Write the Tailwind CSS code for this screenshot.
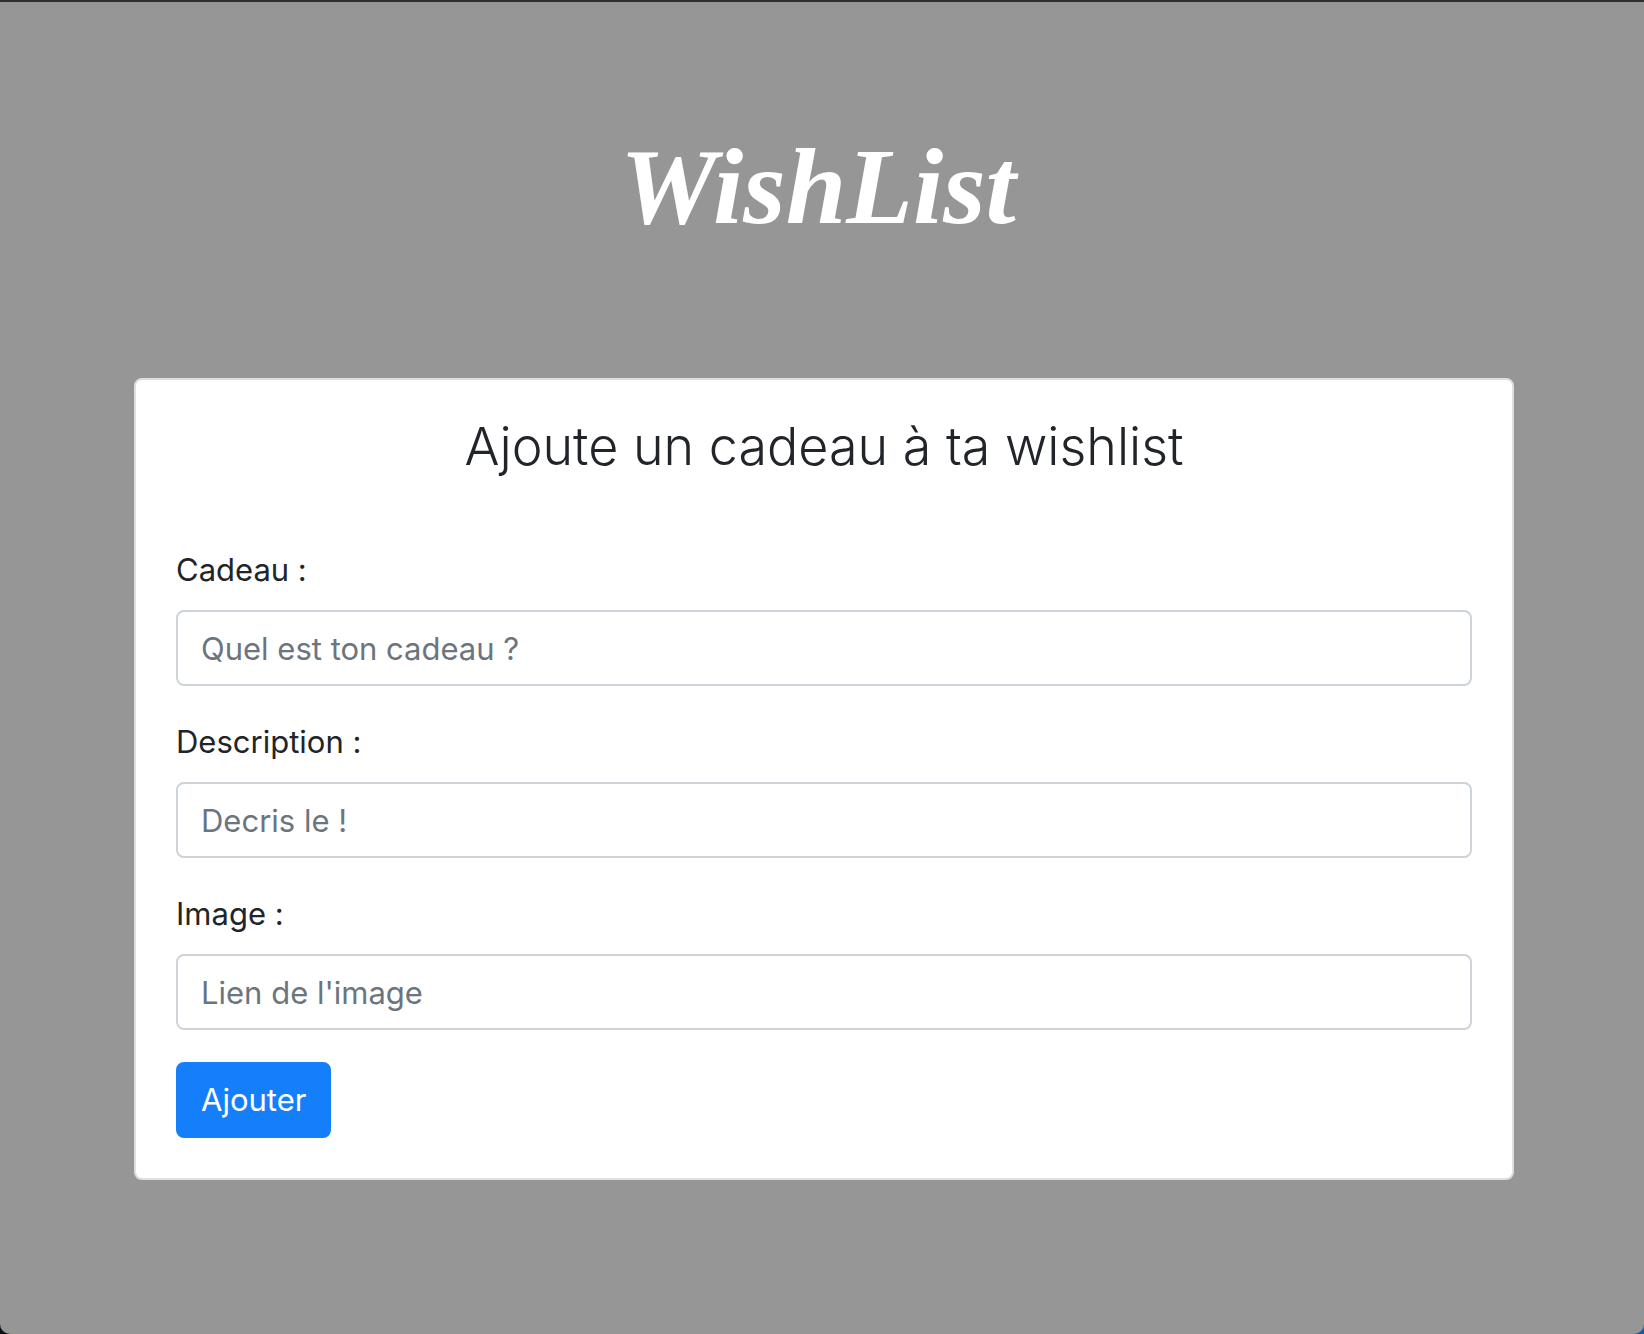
<!DOCTYPE html>
<html lang="fr">
<head>
<meta charset="utf-8">
<meta name="viewport" content="width=device-width, initial-scale=1">
<title>WishList</title>
<script src="https://cdn.jsdelivr.net/npm/@tailwindcss/browser@4"></script>
</head>
<body class="bg-linear-to-r from-[#0b1016] from-50% to-[#0f5ea5] to-50% font-['Inter',sans-serif] text-[#212529]">
<div class="flex min-h-screen flex-col items-center rounded-b-[10px] border-t-2 border-[#303030] bg-[#969696] pr-8 pl-9 pb-16">
  <header class="flex h-94 items-center justify-center pr-3 pb-2">
    <h1 class="font-['Liberation_Serif',serif] text-[109px] leading-none font-bold text-white italic">WishList</h1>
  </header>
  <main class="w-full max-w-[1380px] rounded-lg border-2 border-[#dfdfdf] bg-white p-10">
    <h2 class="mb-18 text-center text-[52px] leading-[54px] font-light">Ajoute un cadeau à ta wishlist</h2>
    <form class="flex flex-col items-start gap-8 text-[31px] leading-12">
      <div class="flex w-full flex-col gap-4">
        <label for="cadeau">Cadeau :</label>
        <input id="cadeau" type="text" placeholder="Quel est ton cadeau ?" class="h-19 w-full rounded-lg border-2 border-[#ced4da] bg-white px-[23px] placeholder:text-[#6c757d]">
      </div>
      <div class="flex w-full flex-col gap-4">
        <label for="description">Description :</label>
        <input id="description" type="text" placeholder="Decris le !" class="h-19 w-full rounded-lg border-2 border-[#ced4da] bg-white px-[23px] placeholder:text-[#6c757d]">
      </div>
      <div class="flex w-full flex-col gap-4">
        <label for="image">Image :</label>
        <input id="image" type="text" placeholder="Lien de l'image" class="h-19 w-full rounded-lg border-2 border-[#ced4da] bg-white px-[23px] placeholder:text-[#6c757d]">
      </div>
      <button type="submit" class="h-19 rounded-lg border-2 border-[#157ffb] bg-[#157ffb] px-[23px] text-white">Ajouter</button>
    </form>
  </main>
</div>
</body>
</html>
